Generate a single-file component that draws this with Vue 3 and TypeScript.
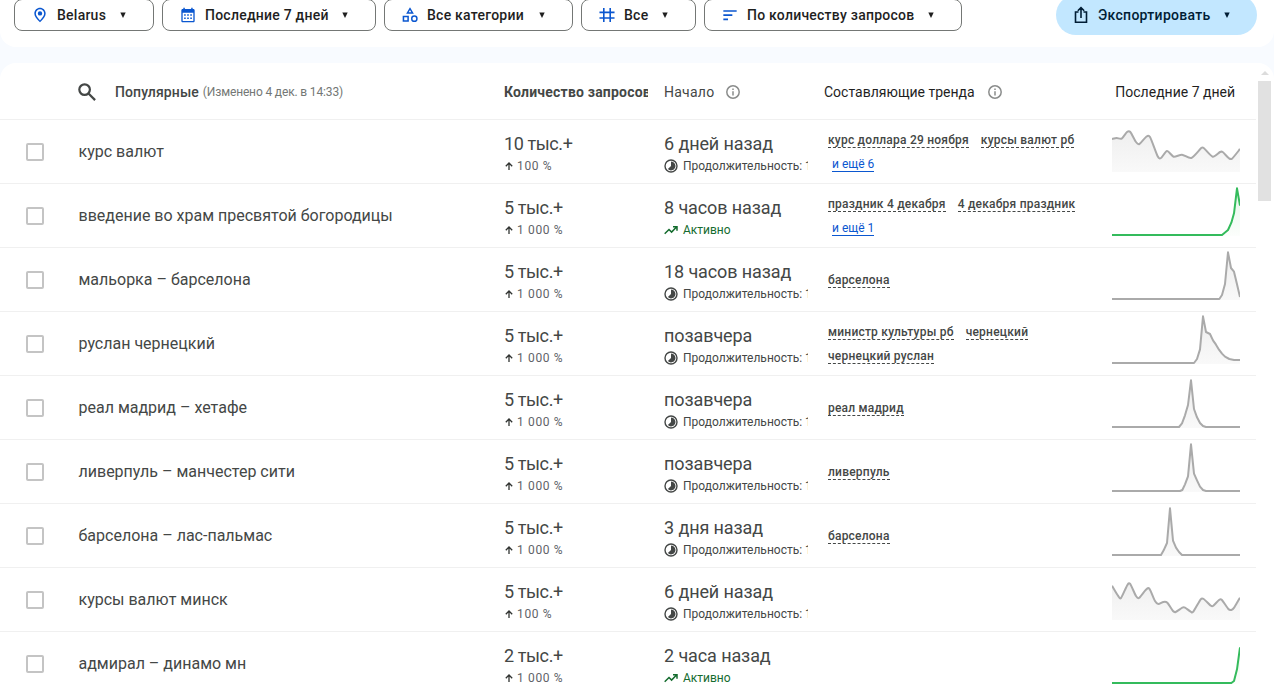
<script setup lang="ts">
interface Filter {
  icon: 'pin' | 'calendar' | 'category' | 'tag' | 'sort'
  label: string
}

interface Trend {
  title: string
  volume: string
  growth: string
  started: string
  active: boolean
  related: string[]
  more?: string
  wavy?: boolean
  points: string
}

const filters: Filter[] = [
  { icon: 'pin', label: 'Belarus' },
  { icon: 'calendar', label: 'Последние 7 дней' },
  { icon: 'category', label: 'Все категории' },
  { icon: 'tag', label: 'Все' },
  { icon: 'sort', label: 'По количеству запросов' },
]

// Sparkline points live in a 384 x 192 box; the baseline is at y = 153.
const trends: Trend[] = [
  {
    title: 'курс валют', volume: '10 тыс.+', growth: '100 %', started: '6 дней назад', active: false, wavy: true,
    related: ['курс доллара 29 ноября', 'курсы валют рб'], more: 'и ещё 6',
    points: '0,57 14,54 29,56 45,36 55,36 72,66 82,72 102,51 114,51 137,109 147,114 165,93 185,110 210,104 238,114 267,85 275,84 302,110 324,96 332,96 350,114 360,116 384,87',
  },
  {
    title: 'введение во храм пресвятой богородицы', volume: '5 тыс.+', growth: '1 000 %', started: '8 часов назад', active: true,
    related: ['праздник 4 декабря', '4 декабря праздник'], more: 'и ещё 1',
    points: '0,153 330,153 348,138 358,116 366,88 375,13 384,65',
  },
  {
    title: 'мальорка – барселона', volume: '5 тыс.+', growth: '1 000 %', started: '18 часов назад', active: false,
    related: ['барселона'],
    points: '0,153 322,153 330,141 339,108 348,13 357,60 366,71 375,109 384,147',
  },
  {
    title: 'руслан чернецкий', volume: '5 тыс.+', growth: '1 000 %', started: 'позавчера', active: false,
    related: ['министр культуры рб', 'чернецкий', 'чернецкий руслан'],
    points: '0,153 246,153 255,141 264,112 273,13 282,60 294,66 303,85 312,98 321,113 330,125 339,134 352,141 366,144 384,144',
  },
  {
    title: 'реал мадрид – хетафе', volume: '5 тыс.+', growth: '1 000 %', started: 'позавчера', active: false,
    related: ['реал мадрид'],
    points: '0,153 201,153 210,142 219,118 228,87 237,13 246,99 255,124 264,141 273,150 282,153 384,153',
  },
  {
    title: 'ливерпуль – манчестер сити', volume: '5 тыс.+', growth: '1 000 %', started: 'позавчера', active: false,
    related: ['ливерпуль'],
    points: '0,153 204,153 211,150 219,133 228,109 237,13 246,101 255,121 264,140 273,150 282,153 384,153',
  },
  {
    title: 'барселона – лас-пальмас', volume: '5 тыс.+', growth: '1 000 %', started: '3 дня назад', active: false,
    related: ['барселона'],
    points: '0,153 147,153 155,139 165,117 174,13 183,110 192,131 201,144 210,153 384,153',
  },
  {
    title: 'курсы валют минск', volume: '5 тыс.+', growth: '100 %', started: '6 дней назад', active: false, wavy: true,
    related: [],
    points: '0,53 18,83 27,90 45,53 54,47 72,84 81,90 101,66 112,62 129,99 139,108 154,102 166,104 183,129 191,132 211,119 219,119 236,131 244,131 266,94 275,93 295,112 303,114 321,96 329,95 349,123 358,126 367,118 384,89',
  },
  {
    title: 'адмирал – динамо мн', volume: '2 тыс.+', growth: '1 000 %', started: '2 часа назад', active: true,
    related: [],
    points: '0,153 358,153 366,147 375,112 384,46',
  },
]

// Straight segments for spikes, Catmull-Rom curves for wavy series.
function linePath(t: Trend): string {
  const p = t.points.split(' ').map((s) => s.split(',').map(Number))
  if (!t.wavy) return 'M' + p.map((c) => c.join(' ')).join('L')
  let d = `M${p[0][0]} ${p[0][1]}`
  for (let i = 0; i < p.length - 1; i++) {
    const a = p[Math.max(0, i - 1)]
    const b = p[i]
    const c = p[i + 1]
    const e = p[Math.min(p.length - 1, i + 2)]
    d += `C${b[0] + (c[0] - a[0]) / 8} ${b[1] + (c[1] - a[1]) / 8} ${c[0] - (e[0] - b[0]) / 8} ${c[1] - (e[1] - b[1]) / 8} ${c[0]} ${c[1]}`
  }
  return d
}
</script>

<template>
  <div class="page">
    <header class="toolbar">
      <div class="filters">
        <button v-for="f in filters" :key="f.label" class="filter">
          <svg class="filter-icon" viewBox="0 0 24 24" fill="currentColor">
            <path v-if="f.icon === 'pin'" d="M12 1C7.600 1 3.500 4.400 3.500 9.700c0 3.600 2.800 7.900 8.500 13.300 5.700-5.400 8.500-9.700 8.500-13.300C20.500 4.400 16.400 1 12 1zm0 19.100c-4.200-4.200-6.200-7.600-6.200-10.300C5.800 6 8.700 3.300 12 3.300S18.200 6 18.200 9.800c0 2.700-2 6.100-6.200 10.300zM12 6.300a3.300 3.300 0 1 0 0 6.600 3.300 3.300 0 0 0 0-6.600z" />
            <path v-else-if="f.icon === 'calendar'" d="M20 3h-1V1h-2.200v2H7.200V1H5v2H4C2.900 3 2 3.900 2 5v16c0 1.100.9 2 2 2h16c1.100 0 2-.9 2-2V5c0-1.100-.9-2-2-2zm0 18H4V8.500h16V21zM6.200 11h2.400v2.200H6.200zm4.600 0h2.400v2.200h-2.400zm4.600 0h2.400v2.200h-2.400zm-9.200 4.700h2.400v2.200H6.200zm4.600 0h2.400v2.200h-2.400zm4.600 0h2.400v2.200h-2.400z" />
            <path v-else-if="f.icon === 'category'" d="M12 .5L6.200 10h11.600L12 .5zm0 4.100L14 7.800h-4L12 4.600zM18.500 12.500a5 5 0 1 0 0 10 5 5 0 0 0 0-10zm0 7.800a2.800 2.800 0 1 1 0-5.600 2.800 2.800 0 0 1 0 5.600zM1 22.300h9.300V13H1v9.300zm2.300-7H8V20H3.300v-4.700z" />
            <path v-else-if="f.icon === 'tag'" d="M6 1.500h2.400v5.300h7.200V1.500H18v5.300h5.300v2.400H18v6h5.300v2.400H18v4.900h-2.400v-4.900H8.400v4.900H6v-4.900H.7v-2.400H6v-6H.7V6.800H6V1.500zm2.400 7.700v6h7.200v-6H8.400z" />
            <path v-else d="M2 4.700h20v2.400H2zm0 6.300h13.500v2.400H2zm0 6.300h7v2.400H2z" />
          </svg>
          <span>{{ f.label }}</span>
          <svg class="caret" viewBox="0 0 6 6"><path d="M.3 .5h5.400L3 6z" fill="currentColor" /></svg>
        </button>
      </div>
      <button class="export">
        <svg class="export-icon" viewBox="0 0 14 18" fill="none" stroke="currentColor" stroke-width="1.600">
          <path d="M4.500 6H1.500v10.200h11V6h-3M7 12V2M3.800 4.800L7 1.600l3.200 3.200" />
        </svg>
        <span>Экспортировать</span>
        <svg class="caret" viewBox="0 0 6 6"><path d="M.3 .5h5.400L3 6z" fill="currentColor" /></svg>
      </button>
    </header>

    <main class="panel">
      <div class="table">
        <div class="row head">
          <div class="head-title">
            <svg class="search" viewBox="0 0 18 18" fill="none" stroke="currentColor" stroke-width="2.200">
              <circle cx="6.600" cy="6.600" r="5.300" />
              <path d="M10.500 10.500l6.600 6.600" />
            </svg>
            <span class="popular">Популярные</span>
            <span class="updated">(Изменено 4 дек. в 14:33)</span>
          </div>
          <div class="clip head-volume">Количество запросов</div>
          <div class="head-start">
            Начало
            <svg class="info" viewBox="0 0 14 14"><circle cx="7" cy="7" r="6.200" /><path d="M7 6.200v4.300M7 3.500v1.500" /></svg>
          </div>
          <div class="head-related">
            Составляющие тренда
            <svg class="info" viewBox="0 0 14 14"><circle cx="7" cy="7" r="6.200" /><path d="M7 6.200v4.300M7 3.500v1.500" /></svg>
          </div>
          <div class="head-chart">Последние 7 дней</div>
        </div>

        <div v-for="t in trends" :key="t.title" class="row">
          <span class="checkbox"></span>
          <div class="title">{{ t.title }}</div>
          <div class="clip">
            <div class="big volume">{{ t.volume }}</div>
            <div class="sub growth">
              <svg class="up" viewBox="0 0 8 8"><path d="M4 8V1.200M.8 4.200L4 1l3.200 3.200" /></svg>
              <span>{{ t.growth }}</span>
            </div>
          </div>
          <div class="clip">
            <div class="big">{{ t.started }}</div>
            <div v-if="t.active" class="sub active">
              <svg class="status" viewBox="0 0 14 14" fill="none" stroke="currentColor" stroke-width="1.500">
                <path d="M.7 10.800L5 6.500l2.600 2.600 4.900-5M9 3.700h4v4" />
              </svg>
              <span>Активно</span>
            </div>
            <div v-else class="sub lasted">
              <svg class="status" viewBox="0 0 14 14">
                <circle cx="7" cy="7" r="6" fill="none" stroke="currentColor" stroke-width="1.400" />
                <path d="M7 2.600A4.400 4.400 0 1 1 3.900 10.100L7 7z" fill="currentColor" />
              </svg>
              <span>Продолжительность: 1 день</span>
            </div>
          </div>
          <div class="related">
            <span v-for="r in t.related" :key="r" class="term"><span>{{ r }}</span></span>
            <span v-if="t.more" class="term more"><span>{{ t.more }}</span></span>
          </div>
          <svg class="spark" :class="{ live: t.active }" viewBox="0 0 384 192">
            <defs>
              <linearGradient id="fade-grey" x1="0" y1="0" x2="0" y2="156" gradientUnits="userSpaceOnUse">
                <stop offset="0" stop-color="#ececec" /><stop offset="1" stop-color="#f9f9f9" />
              </linearGradient>
              <linearGradient id="fade-green" x1="0" y1="0" x2="0" y2="156" gradientUnits="userSpaceOnUse">
                <stop offset="0" stop-color="#e2f5e7" /><stop offset="1" stop-color="#fcfefc" />
              </linearGradient>
            </defs>
            <path :d="`${linePath(t)}L384 156L0 156Z`" :fill="t.active ? 'url(#fade-green)' : 'url(#fade-grey)'" />
            <path class="line" :d="linePath(t)" />
          </svg>
        </div>
      </div>
      <div class="scrollbar">
        <svg class="scroll-up" viewBox="0 0 8 4"><path d="M0 4l4-4 4 4z" fill="#dcdcdc" /></svg>
        <div class="thumb"></div>
      </div>
    </main>
  </div>
</template>

<style>
body {
  background: #f8fafd;
}
</style>

<style scoped>
.page {
  height: 685px;
  overflow: hidden;
  display: flex;
  flex-direction: column;
  gap: 16px;
  background: #f8fbff;
  color: #444746;
  font-family: Roboto, "Noto Sans", sans-serif;
}
.toolbar {
  flex: none;
  height: 47px;
  box-sizing: border-box;
  padding: 0 17px 17px 14px;
  display: flex;
  align-items: center;
  justify-content: space-between;
  background: #fff;
  border-radius: 0 0 16px 16px;
}
.filters {
  display: grid;
  grid-template-columns: 140px 214px 189px 115px 258px;
  gap: 8px;
}
.filter,
.export {
  box-sizing: border-box;
  display: flex;
  align-items: center;
  font-family: inherit;
  font-size: 14px;
  font-weight: 500;
  white-space: nowrap;
  letter-spacing: 0.24px;
}
.filter {
  height: 32px;
  padding: 0 27px 0 15px;
  gap: 7px;
  border: 1px solid #747775;
  border-radius: 8px;
  background: #fff;
  color: #1f1f1f;
}
.filter-icon {
  width: 20px;
  height: 16px;
  flex: none;
  color: #0b57d0;
}
.caret {
  width: 6px;
  height: 6px;
  margin-left: auto;
  flex: none;
}
.export {
  width: 201px;
  height: 40px;
  padding: 0 27px 0 18px;
  gap: 10px;
  border: 0;
  border-radius: 20px;
  background: #c2e7ff;
  color: #001d35;
  letter-spacing: 0.3px;
}
.export-icon {
  width: 14px;
  height: 18px;
}
.panel {
  flex: 1;
  min-height: 0;
  display: flex;
  background: #fff;
  border-radius: 16px 16px 0 0;
  overflow: hidden;
}
.table {
  width: 1256px;
}
.row {
  box-sizing: border-box;
  height: 64px;
  padding: 0 16px 0 26px;
  display: grid;
  grid-template-columns: 18px 460px 160px 160px 288px 128px;
  align-items: center;
  border-bottom: 1px solid #f0f0f0;
  white-space: nowrap;
}
.head {
  height: 57px;
  grid-template-columns: 478px 160px 160px 1fr auto;
  padding-right: 21px;
  padding-top: 2px;
  font-size: 14px;
}
.head-title {
  display: flex;
  align-items: center;
  padding-left: 52px;
}
.search {
  width: 18px;
  height: 18px;
  margin-right: 19px;
}
.popular {
  font-weight: 500;
  letter-spacing: 0.1px;
}
.updated {
  margin-left: 4px;
  font-size: 12px;
  letter-spacing: -0.15px;
  color: #747775;
}
.clip {
  width: 144px;
  overflow: hidden;
}
.head-volume {
  font-weight: 700;
  letter-spacing: 0.2px;
}
.head-start,
.head-related {
  display: flex;
  align-items: center;
  gap: 13px;
}
.head-start {
  gap: 12px;
  letter-spacing: 0.25px;
}
.head-related,
.head-chart {
  color: #1f1f1f;
}
.info {
  width: 14px;
  height: 14px;
  fill: none;
  stroke: #8a8c8b;
  stroke-width: 1.5;
}
.checkbox {
  box-sizing: border-box;
  width: 18px;
  height: 18px;
  border: 2px solid #c4c4c4;
  border-radius: 2px;
}
.title {
  padding: 0 0 2px 34.5px;
  font-size: 16px;
}
.big {
  padding-top: 3px;
  font-size: 18px;
  line-height: 24px;
  letter-spacing: -0.1px;
}
.volume {
  letter-spacing: -0.4px;
}
.sub {
  display: flex;
  align-items: center;
  height: 19px;
  font-size: 12px;
}
.growth {
  color: #5f6368;
  letter-spacing: 0.65px;
}
.up {
  width: 8px;
  height: 8px;
  margin: 0 4px 0 1px;
  fill: none;
  stroke: #303331;
  stroke-width: 1.3;
}
.status {
  width: 14px;
  height: 14px;
  margin-right: 5px;
  flex: none;
}
.active {
  color: #146c2e;
}
.related {
  width: 270px;
  display: flex;
  flex-wrap: wrap;
  column-gap: 12px;
  padding-left: 4px;
  box-sizing: border-box;
}
.term {
  height: 24px;
  display: flex;
  align-items: center;
  font-size: 12px;
  font-weight: 500;
  letter-spacing: 0.22px;
}
.term > span {
  height: 16px;
  line-height: 16px;
  box-sizing: border-box;
  border-bottom: 1px dashed #444746;
}
.more {
  margin-left: 4px;
  color: #0b57d0;
  font-weight: 400;
  letter-spacing: 0;
}
.more > span {
  border-bottom: 1px solid #0b57d0;
}
.spark {
  width: 128px;
  height: 64px;
}
.line {
  fill: none;
  stroke: #aaa;
  stroke-width: 6;
  stroke-linejoin: round;
}
.live .line {
  stroke: #34bb5c;
}
.scrollbar {
  width: 13px;
  padding: 8px 0 0 2px;
  display: flex;
  flex-direction: column;
  align-items: center;
}
.scroll-up {
  width: 8px;
  height: 4px;
}
.thumb {
  width: 13px;
  height: 120px;
  margin-top: 6px;
  background: #e1e1e1;
}
</style>
